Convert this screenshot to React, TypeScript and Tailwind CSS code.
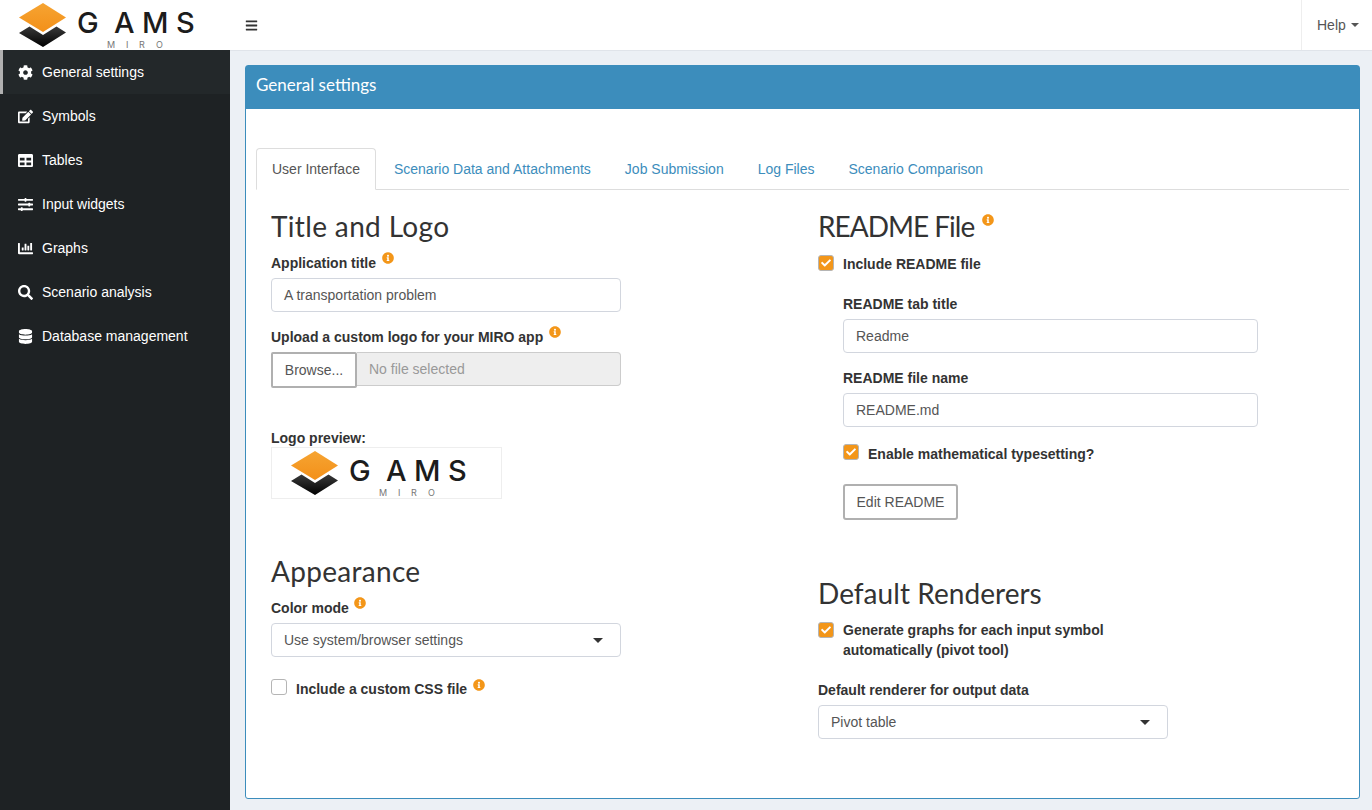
import React from "react";
import { FaCog, FaEdit, FaTable, FaSlidersH, FaChartBar, FaSearch, FaDatabase, FaBars, FaInfoCircle, FaCheck } from "react-icons/fa";

const heading = "font-['Lato'] text-[#333] font-normal text-[28px] pb-[2px]";

function Info({ className = "" }: { className?: string }) {
  return <FaInfoCircle className={"text-[#f39619] text-[12px] inline-block " + className} />;
}

function Check({ on, className = "" }: { on?: boolean; className?: string }) {
  return on ? (
    <span className={"w-4 h-4 rounded-[3px] bg-[#f39619] border border-[#b5b5b5] flex items-center justify-center shrink-0 " + className}>
      <FaCheck className="text-white text-[10px]" />
    </span>
  ) : (
    <span className={"w-4 h-4 rounded-[3px] bg-white border border-[#b5b5b5] shrink-0 " + className} />
  );
}

function Logo() {
  return (
    <svg width={200} height={50} viewBox="0 0 200 50" className="shrink-0">
      <defs>
        <linearGradient id="o" x1="0" y1="0" x2="0" y2="1">
          <stop offset="0" stopColor="#f6a432" />
          <stop offset="1" stopColor="#f39019" />
        </linearGradient>
        <linearGradient id="k" x1="0" y1="0" x2="0" y2="1">
          <stop offset="0" stopColor="#3a3a3a" />
          <stop offset="1" stopColor="#000" />
        </linearGradient>
      </defs>
      <path d="M19 33 L29.500 26.500 L43 35 L56.500 26.500 L66 32.500 L43 47 Z" fill="url(#k)" />
      <path d="M43 3 L66 17.500 L43 32 L19 17.500 Z" fill="url(#o)" />
      <text x="77 114 142 176" y="33" fontFamily="Inter, sans-serif" fontSize="29" fontWeight="500" fill="#1c1c1c">GAMS</text>
      <text x="107 126 139 156" y="47.500" fontFamily="Inter, sans-serif" fontSize="9" fill="#777">MIRO</text>
    </svg>
  );
}

const nav: [React.ComponentType<{ className?: string }>, string][] = [
  [FaCog, "General settings"],
  [FaEdit, "Symbols"],
  [FaTable, "Tables"],
  [FaSlidersH, "Input widgets"],
  [FaChartBar, "Graphs"],
  [FaSearch, "Scenario analysis"],
  [FaDatabase, "Database management"],
];

function Field({ children, className = "" }: { children: React.ReactNode; className?: string }) {
  return (
    <div className={"h-[34px] w-[350px] border border-[#d2d6de] rounded-[4px] px-3 flex items-center text-[#555] bg-white " + className}>
      {children}
    </div>
  );
}

function Select({ children }: { children: React.ReactNode }) {
  return (
    <Field className="justify-between">
      <span>{children}</span>
      <span className="w-0 h-0 border-x-[5.500px] border-x-transparent border-t-[5px] border-t-[#333] mr-[5px]" />
    </Field>
  );
}

export default function App() {
  return (
    <div className="h-[810px] w-[1372px] overflow-hidden flex flex-col bg-[#ecf0f5] font-['Liberation_Sans',sans-serif] text-[14px] text-[#333]">
      <header className="h-[51px] shrink-0 bg-white border-b border-[#e0e4ea] flex items-center">
        <div className="w-[230px] h-[50px] shrink-0 overflow-hidden">
          <Logo />
        </div>
        <FaBars className="ml-[15px] text-[13px] text-[#333]" />
        <div className="ml-auto h-full w-[71px] border-l border-[#eee] flex items-center pl-[15px] gap-[5px] text-[#555]">
          Help
          <span className="w-0 h-0 border-x-[4px] border-x-transparent border-t-[4px] border-t-[#555]" />
        </div>
      </header>
      <div className="flex flex-1 min-h-0">
        <aside className="w-[230px] shrink-0 bg-[#1e2224] text-white -mt-[1px]">
          {nav.map(([Icon, label], i) => (
            <div
              key={label}
              className={"h-[44px] flex items-center pl-[15px] border-l-[3px] " + (i === 0 ? "border-[#b0b0b0] bg-[#23282a]" : "border-transparent")}
            >
              <span className="w-[24px] shrink-0 flex justify-start">
                <Icon className="text-[15px] text-white" />
              </span>
              <span>{label}</span>
            </div>
          ))}
        </aside>
        <main className="flex-1 min-w-0 pl-[15px] pr-[12px] pt-[14px] pb-[11px]">
          <section className="h-full rounded-[3px] border border-[#3c8dbc] bg-white flex flex-col">
            <div className="h-[43px] shrink-0 bg-[#3c8dbc] text-white flex items-center px-[10px] pb-[5px] text-[17px] font-['Lato']">
              General settings
            </div>
            <div className="pt-[39px] px-[10px] flex-1 flex flex-col min-h-0">
              <div className="flex h-[42px] border-b border-[#ddd] shrink-0">
                <div className="h-[42px] mr-[1px] px-[15px] bg-white border border-[#ddd] border-b-white rounded-t-[4px] text-[#555] flex items-center">User Interface</div>
                {["Scenario Data and Attachments", "Job Submission", "Log Files", "Scenario Comparison"].map((t) => (
                  <div key={t} className="h-[42px] px-[17px] text-[#3c8dbc] flex items-center">{t}</div>
                ))}
              </div>
              <div className="flex pl-[15px] pt-[19px]">
                <div className="w-[547px] shrink-0">
                  <div className="h-[36px] flex items-center">
                    <h2 className={heading + " tracking-[0.35px]"}>Title and Logo</h2>
                  </div>
                  <div className="mt-[8px] h-[20px] flex items-center gap-[6px] font-bold">
                    Application title <Info className="-mt-[11px]" />
                  </div>
                  <Field className="mt-[5px]">A transportation problem</Field>
                  <div className="mt-[15px] h-[20px] flex items-center gap-[6px] font-bold">
                    Upload a custom logo for your MIRO app <Info className="-mt-[10px]" />
                  </div>
                  <div className="mt-[5px] flex w-[350px] h-[36px]">
                    <div className="w-[86px] h-[36px] border-2 border-[#b0b0b0] rounded-[2px] bg-white flex items-center justify-center text-[#555] shrink-0">Browse...</div>
                    <div className="flex-1 h-[34px] border border-[#ccc] border-l-0 bg-[#eee] rounded-r-[4px] text-[#999] flex items-center px-[12px]">No file selected</div>
                  </div>
                  <div className="mt-[42px] h-[16px] flex items-center font-bold">Logo preview:</div>
                  <div className="mt-[1px] w-[231px] h-[52px] border border-[#eee] flex items-center overflow-hidden">
                    <Logo />
                  </div>
                  <div className="mt-[55px] h-[36px] flex items-center">
                    <h2 className={heading + " tracking-[0.3px]"}>Appearance</h2>
                  </div>
                  <div className="mt-[8px] h-[20px] flex items-center gap-[5px] font-bold">
                    Color mode <Info className="-mt-[10px]" />
                  </div>
                  <div className="mt-[5px]"><Select>Use system/browser settings</Select></div>
                  <div className="mt-[22px] h-[20px] flex items-center font-bold">
                    <Check className="-mt-[4px]" />
                    <span className="ml-[9px]">Include a custom CSS file</span>
                    <Info className="ml-[6px] -mt-[8px]" />
                  </div>
                </div>
                <div className="flex-1">
                  <div className="h-[36px] flex items-center gap-[8px]">
                    <h2 className={heading + " tracking-[-1px]"}>README File</h2>
                    <Info className="-mt-[14px]" />
                  </div>
                  <div className="mt-[9px] h-[20px] flex items-center font-bold">
                    <Check on className="-mt-[2px]" />
                    <span className="ml-[9px]">Include README file</span>
                  </div>
                  <div className="pl-[25px]">
                    <div className="mt-[20px] h-[20px] flex items-center font-bold">README tab title</div>
                    <Field className="mt-[5px] w-[415px]">Readme</Field>
                    <div className="mt-[15px] h-[20px] flex items-center font-bold">README file name</div>
                    <Field className="mt-[5px] w-[415px]">README.md</Field>
                    <div className="mt-[17px] h-[20px] flex items-center font-bold">
                      <Check on className="-mt-[4px]" />
                      <span className="ml-[9px]">Enable mathematical typesetting?</span>
                    </div>
                    <div className="mt-[20px] w-[115px] h-[36px] border-2 border-[#b0b0b0] rounded-[3px] text-[#555] flex items-center justify-center">Edit README</div>
                  </div>
                  <div className="mt-[56px] h-[36px] flex items-center">
                    <h2 className={heading + " tracking-[0.05px]"}>Default Renderers</h2>
                  </div>
                  <div className="mt-[8px] flex font-bold leading-[20px]">
                    <span className="mt-[2px]"><Check on /></span>
                    <span className="ml-[9px]">Generate graphs for each input symbol<br />automatically (pivot tool)</span>
                  </div>
                  <div className="mt-[20px] h-[20px] flex items-center font-bold">Default renderer for output data</div>
                  <div className="mt-[5px]"><Select>Pivot table</Select></div>
                </div>
              </div>
            </div>
          </section>
        </main>
      </div>
    </div>
  );
}
